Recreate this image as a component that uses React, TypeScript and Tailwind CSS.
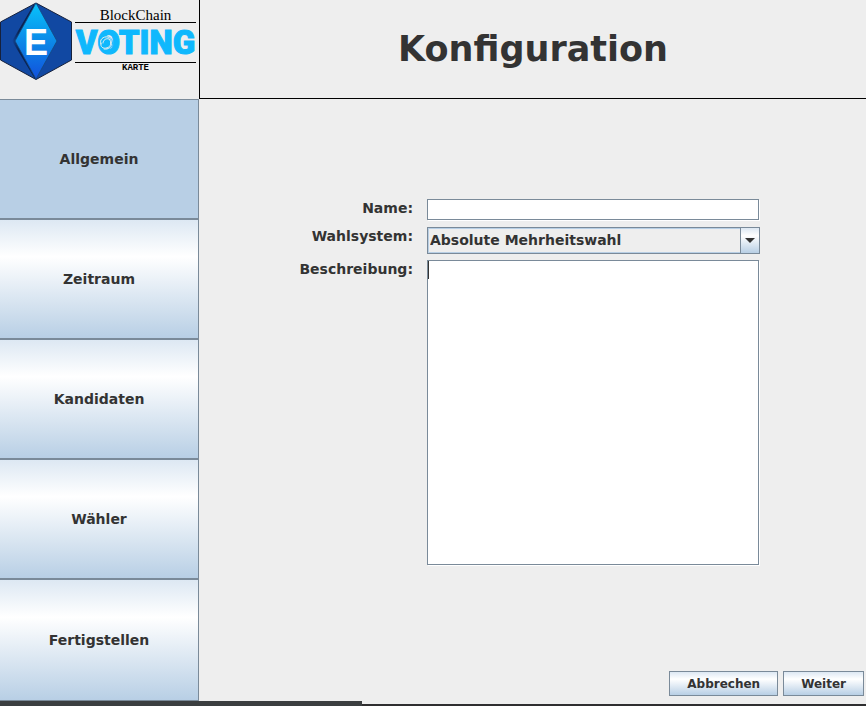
import React from "react";

const steps = ["Allgemein", "Zeitraum", "Kandidaten", "Wähler", "Fertigstellen"];

const metal =
  "bg-[linear-gradient(to_bottom,#dde8f3_0%,#ffffff_31%,#b8cfe5_100%)]";

function Logo() {
  return (
    <div className="flex w-[199px] shrink-0 gap-[3px]">
      <svg viewBox="0 0 72 78" className="mt-[2px] h-[78px] w-[72px] shrink-0" role="img" aria-label="E">
        <defs>
          <linearGradient id="gem" x1="0" y1="0" x2="0" y2="1">
            <stop offset="0" stopColor="#08c4fb" />
            <stop offset="0.5" stopColor="#0c8ae8" />
            <stop offset="1" stopColor="#1150dc" />
          </linearGradient>
          <linearGradient id="shade" x1="0" y1="0" x2="1" y2="0">
            <stop offset="0" stopColor="#1148a2" />
            <stop offset="0.3" stopColor="#0a2350" />
          </linearGradient>
        </defs>
        <path d="M36 1 71.500 20V58L36 77.500.500 58V20Z" fill="#1148a2" stroke="#16213c" />
        <path d="M34 2 12 39 35 77Z" fill="url(#shade)" />
        <path d="M36 1 57 39 36 77 15 39Z" fill="url(#gem)" stroke="#14467d" strokeWidth="0.8" />
        <text x="36" y="53" textAnchor="middle" fill="#fff" fontSize="36" fontWeight="700" fontFamily="Liberation Sans, sans-serif">E</text>
      </svg>
      <div className="mt-2 flex w-[121px] flex-col items-center text-black">
        <span className="font-['Liberation_Serif',serif] text-[15px] font-normal leading-[14px]">BlockChain</span>
        <span className="relative flex w-full justify-center border-y border-black font-['Roboto',sans-serif] text-[33px] font-black leading-[39px] text-[#0fb8fd] [-webkit-text-stroke:1px_#0fb8fd]">
          VOTING
          <svg viewBox="0 0 14 16" className="absolute top-3 left-[24px] h-4 w-[14px]" fill="none" stroke="#eee" strokeWidth="1" strokeLinecap="round" aria-hidden="true">
            <circle cx="7" cy="8" r="7" fill="#0fb8fd" stroke="none" />
            <path d="M2 9C0 5 4 1 9 2C12 3 13 6 12 8M12 7C14 12 9 15 5 14M2 8C1 12 4 14 8 13M8 13C12 12 13 7 10 4C7 3 4 5 4 8" />
          </svg>
        </span>
        <span className="font-['Liberation_Mono',monospace] text-[9px] font-bold leading-[10px]">KARTE</span>
      </div>
    </div>
  );
}

export default function App() {
  return (
    <div className="flex min-h-screen flex-col bg-[#eeeeee] font-['DejaVu_Sans',sans-serif] text-sm font-bold text-[#333333]">
      <header className="flex h-[99px]">
        <Logo />
        <h1 className="flex flex-1 items-center justify-center border-b border-l border-black text-[35px] font-bold">
          Konfiguration
        </h1>
      </header>
      <div className="flex flex-1">
        <nav className="flex w-[199px] shrink-0 flex-col">
          {steps.map((step, i) => (
            <button
              key={step}
              type="button"
              className={`h-[120px] border border-l-0 border-[#7a8a99] last:h-[122px] ${i === 0 ? "bg-[#b8cfe5]" : metal}`}
            >
              {step}
            </button>
          ))}
        </nav>
        <main className="flex flex-1 flex-col justify-between">
          <form className="grid grid-cols-[114px_1fr] gap-x-[14px] pt-[100px] pr-[106px] pl-[100px]">
            <label htmlFor="name" className="text-right leading-[18px]">Name:</label>
            <div className="pr-px pb-[7px]">
              <input id="name" className="block h-[21px] w-full border border-[#7a8a99] bg-white px-1 shadow-[1px_1px_0_#fff] outline-none" />
            </div>
            <label htmlFor="system" className="text-right leading-[18px]">Wahlsystem:</label>
            <div className="relative pb-[6px]">
              <select id="system" className="block h-[27px] w-full appearance-none border border-[#7a8a99] bg-[#eeeeee] pr-5 pb-[2px] pl-[2px] shadow-[inset_0_0_0_1px_#b8cfe5] outline-none">
                <option>Absolute Mehrheitswahl</option>
              </select>
              <span className={`pointer-events-none absolute top-0 right-0 flex h-[27px] w-5 items-center justify-center border border-[#7a8a99] ${metal}`}>
                <svg viewBox="0 0 10 5" className="h-[5px] w-[10px]" aria-hidden="true">
                  <path d="M0 0H10L5 5Z" fill="#333" />
                </svg>
              </span>
            </div>
            <label htmlFor="description" className="text-right leading-[18px]">Beschreibung:</label>
            <div className="relative pr-px">
              <textarea id="description" className="block h-[305px] w-full resize-none border border-[#7a8a99] bg-white px-px shadow-[1px_1px_0_#fff] outline-none" />
              <span className="pointer-events-none absolute top-px left-px h-[18px] w-px bg-[#333333]" aria-hidden="true" />
            </div>
          </form>
          <div className="flex justify-end gap-[5px] pr-[2px] pb-[5px] text-xs">
            <button type="button" className={`h-[25px] border border-[#7a8a99] px-[17px] ${metal}`}>Abbrechen</button>
            <button type="button" className={`h-[25px] border border-[#7a8a99] px-[17px] ${metal}`}>Weiter</button>
          </div>
        </main>
      </div>
      <footer className="flex h-[5px] items-end">
        <div className="h-[5px] w-[362px] bg-[#3b3e40]" />
        <div className="h-[2px] flex-1 bg-[#2f2e30]" />
      </footer>
    </div>
  );
}
